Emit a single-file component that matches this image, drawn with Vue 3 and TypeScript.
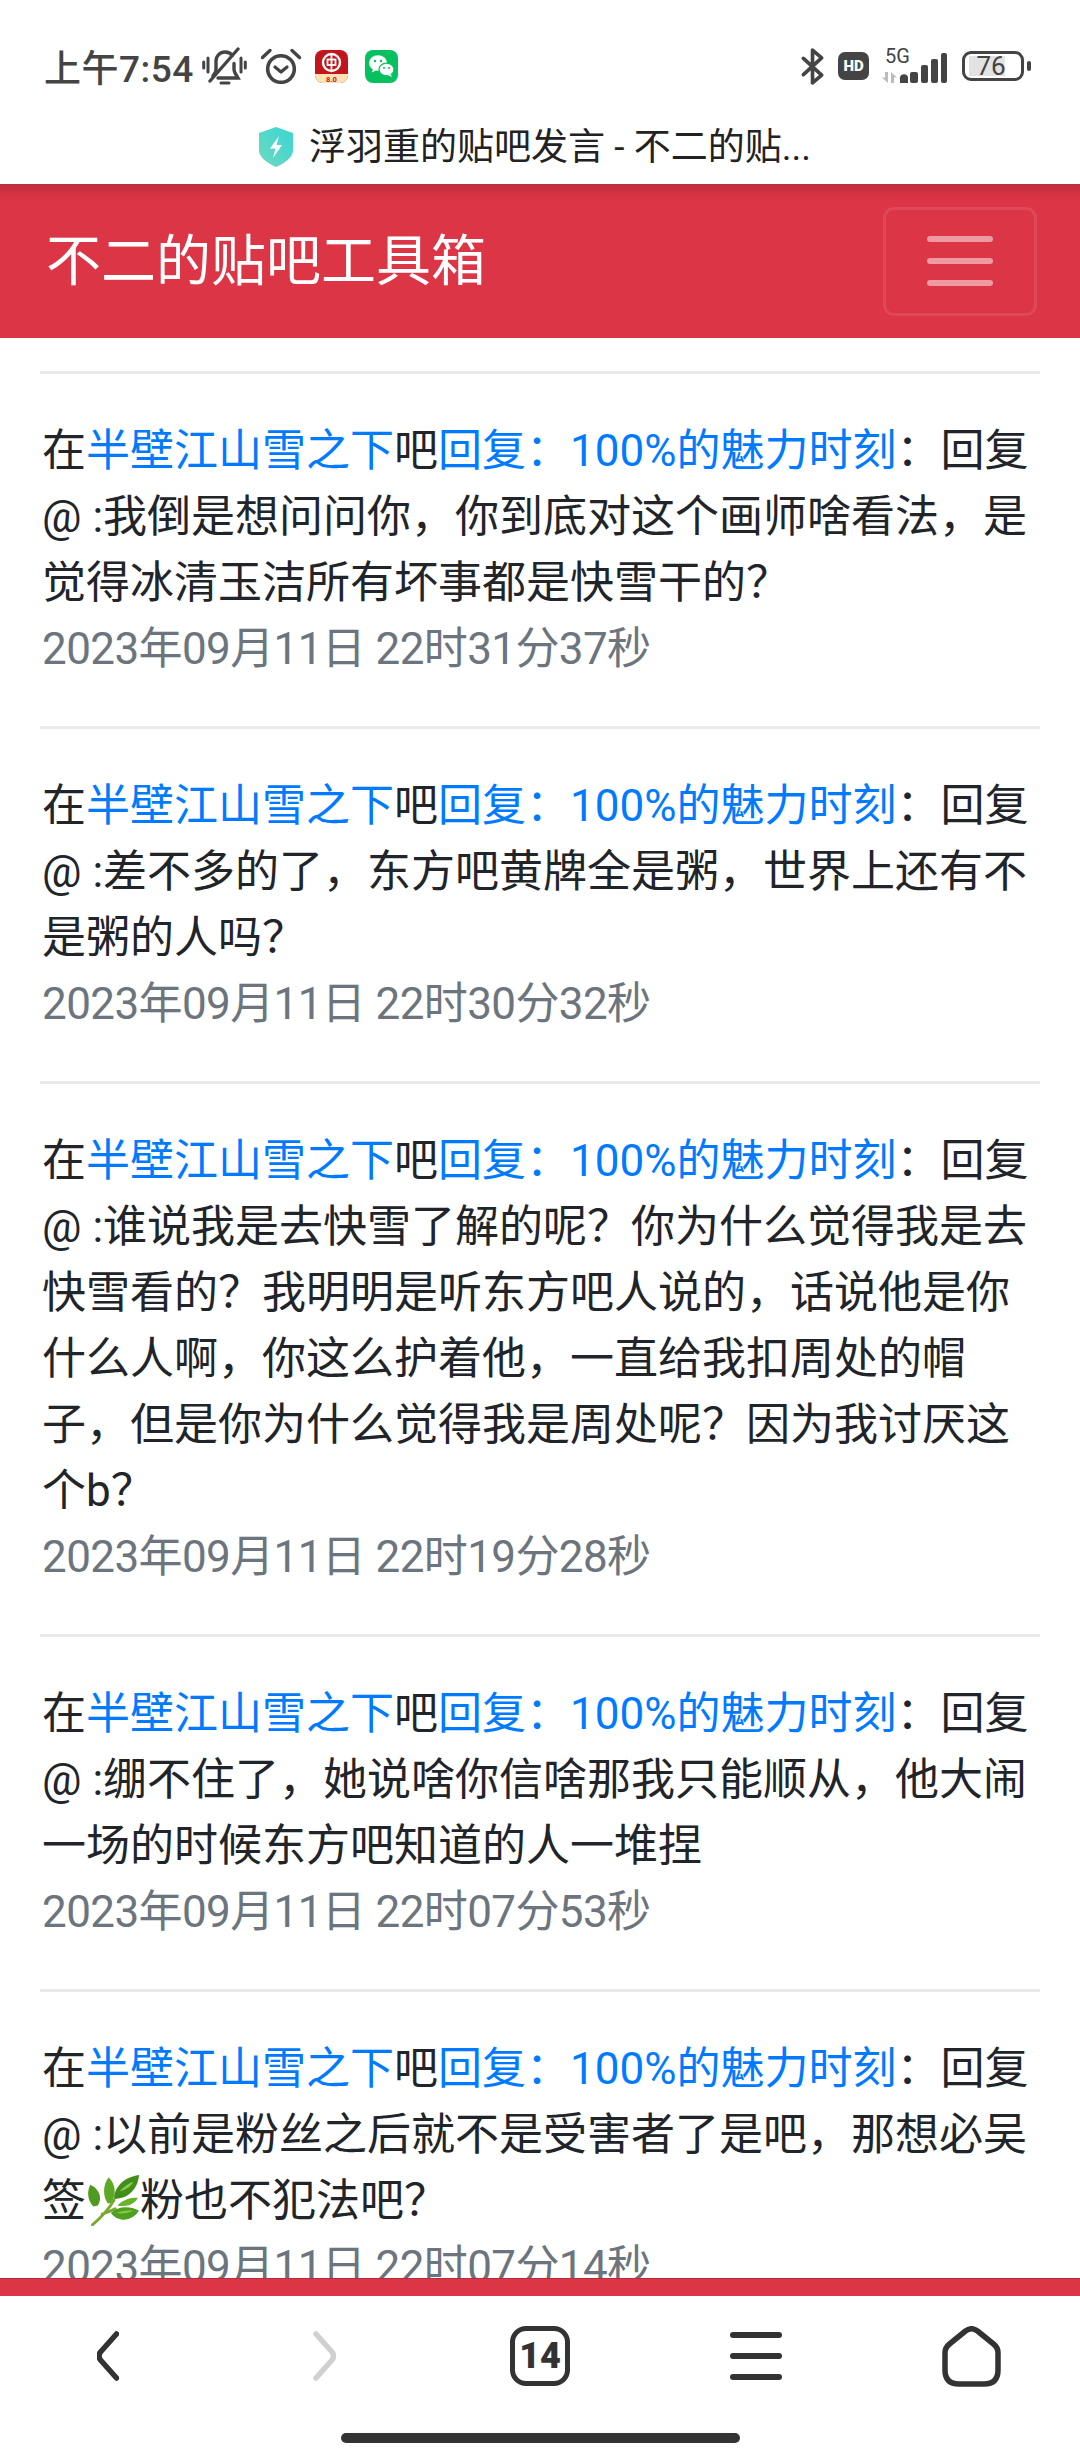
<script setup lang="ts">
interface Post { text: string; time: string; herb?: boolean; after?: string }
const posts: Post[] = [
  { text: '：回复 @ :我倒是想问问你，你到底对这个画师啥看法，是觉得冰清玉洁所有坏事都是快雪干的？', time: '2023年09月11日 22时31分37秒' },
  { text: '：回复 @ :差不多的了，东方吧黄牌全是粥，世界上还有不是粥的人吗？', time: '2023年09月11日 22时30分32秒' },
  { text: '：回复 @ :谁说我是去快雪了解的呢？你为什么觉得我是去快雪看的？我明明是听东方吧人说的，话说他是你什么人啊，你这么护着他，一直给我扣周处的帽子，但是你为什么觉得我是周处呢？因为我讨厌这个b？', time: '2023年09月11日 22时19分28秒' },
  { text: '：回复 @ :绷不住了，她说啥你信啥那我只能顺从，他大闹一场的时候东方吧知道的人一堆捏', time: '2023年09月11日 22时07分53秒' },
  { text: '：回复 @ :以前是粉丝之后就不是受害者了是吧，那想必吴签', herb: true, after: '粉也不犯法吧？', time: '2023年09月11日 22时07分14秒' }
]
</script>

<template>
  <div class="screen">
    <div class="status">
      <div class="status-left">
        <span class="clock">上午7:54</span>
        <svg class="i-bell" viewBox="0 0 45 38" fill="none" stroke="#444" stroke-width="3.400" stroke-linecap="round">
          <path d="M11 29l2-3c.7-1.200 1-2.400 1-3.800V14c0-5 4-9 9-9 3 0 5.600 1.300 7.300 3.500M32 16.500V22c0 1.400.3 2.600 1 3.800L36 31H16" />
          <path d="M8 34L36 2" />
          <path d="M1.700 15v6M6 11v14M39 11v14M43.300 15v6" stroke-width="3" />
          <path d="M19 36h8" stroke-width="3" />
        </svg>
        <svg class="i-alarm" viewBox="0 0 42 36" fill="none" stroke="#444" stroke-linecap="round">
          <circle cx="21" cy="21" r="13.300" stroke-width="3.600" />
          <path d="M15 19l6 5 6-5" stroke-width="3.200" stroke-linejoin="round" />
          <path d="M2.500 9.500L10 2.500M39.500 9.500L32 2.500" stroke-width="3.400" />
        </svg>
        <svg class="i-app" viewBox="0 0 33 33">
          <defs><clipPath id="bankclip"><rect width="33" height="33" rx="8" /></clipPath></defs>
          <g clip-path="url(#bankclip)">
            <rect width="33" height="33" fill="#c3161c" />
            <rect y="24" width="33" height="9" fill="#fde3b4" />
            <circle cx="16.500" cy="12.500" r="8.500" fill="none" stroke="#fff" stroke-width="2.400" />
            <rect x="12.500" y="9.500" width="8" height="5.500" fill="none" stroke="#fff" stroke-width="1.800" />
            <path d="M16.500 4v17" stroke="#fff" stroke-width="1.800" />
            <text x="16.500" y="31.500" text-anchor="middle" font-size="7.500" font-family="Roboto, sans-serif" font-weight="700" fill="#c3161c">8.0</text>
          </g>
        </svg>
        <svg class="i-app i-wechat" viewBox="0 0 33 33">
          <rect width="33" height="33" rx="8" fill="#07c160" />
          <ellipse cx="13" cy="13" rx="9" ry="7.800" fill="#fff" />
          <path d="M8 18.500l-1 4 4.500-2.500z" fill="#fff" />
          <ellipse cx="21.500" cy="19.500" rx="7.500" ry="6.400" fill="#fff" stroke="#07c160" stroke-width="1.200" />
          <path d="M25.500 24l1.500 3-4-1.800z" fill="#fff" />
          <circle cx="10" cy="11" r="1.200" fill="#07c160" />
          <circle cx="16" cy="11" r="1.200" fill="#07c160" />
          <circle cx="19" cy="18" r="1" fill="#07c160" />
          <circle cx="24" cy="18" r="1" fill="#07c160" />
        </svg>
      </div>
      <div class="status-right">
        <svg class="i-bt" viewBox="0 0 25 39" fill="none" stroke="#444" stroke-width="3.800" stroke-linecap="round" stroke-linejoin="round">
          <path d="M2.500 11l19 17.500L12 36.500V2.500l9.500 8L2.500 28" />
        </svg>
        <svg class="i-hd" viewBox="0 0 31 28">
          <rect width="31" height="28" rx="7" fill="#444" />
          <text x="15.500" y="19.200" text-anchor="middle" font-size="15" font-weight="900" font-family="Roboto, sans-serif" fill="#fff">HD</text>
        </svg>
        <svg class="i-signal" viewBox="0 0 66 36">
          <text x="4" y="15" font-size="20" font-family="Roboto, sans-serif" fill="#444">5G</text>
          <path d="M7 24v11l-6-5.500h3V24zM10 35V24l6 5.500h-3V35z" fill="#bbb" />
          <path d="M19 35v-3a4 4 0 0 1 8-3v6z" fill="#444" />
          <rect x="29" y="24" width="8" height="11" rx="2" fill="#444" />
          <rect x="40" y="17" width="7" height="18" rx="2" fill="#444" />
          <rect x="50" y="11" width="7" height="24" rx="2" fill="#444" />
          <rect x="60" y="5" width="6" height="30" rx="2" fill="#444" />
        </svg>
        <div class="battery">
          <div class="battery-box"><span class="battery-fill"></span><span class="battery-num">76</span></div>
          <span class="battery-nub"></span>
        </div>
      </div>
    </div>

    <div class="title-row">
      <svg class="i-shield" viewBox="0 0 34 40">
        <defs>
          <linearGradient id="shieldgrad" x1="0" y1="1" x2="1" y2="0">
            <stop offset="0" stop-color="#70d8bf" />
            <stop offset="1" stop-color="#38d6d4" />
          </linearGradient>
        </defs>
        <path d="M17 0l17 6v18c0 6-9.500 13-17 16C9.500 37 0 30 0 24V6z" fill="url(#shieldgrad)" />
        <path d="M20 9l-9 12.500h5.500L14 31l9-13h-5.500z" fill="#fff" />
      </svg>
      <span class="title-text">浮羽重的贴吧发言 - 不二的贴...</span>
    </div>

    <header class="navbar">
      <span class="brand">不二的贴吧工具箱</span>
      <button class="toggler" type="button" aria-label="menu">
        <span></span><span></span><span></span>
      </button>
    </header>

    <main class="content">
      <article v-for="(p, i) in posts" :key="i" class="post">
        <hr class="rule" />
        <p class="line">在<a class="link">半壁江山雪之下</a>吧<a class="link">回复：100%的魅力时刻</a>{{ p.text }}<svg v-if="p.herb" class="herb" viewBox="0 0 48 48">
            <path d="M5 47C12 41 20 33 25 24M14 37c3-1 8-3 12-5" fill="none" stroke="#7aa832" stroke-width="2.600" stroke-linecap="round" />
            <path d="M6 30C0 24 0 16 3 10c7 3 12 11 7 19z" fill="#4f9a1f" />
            <path d="M19 27c-4-6-5-16 1-24 6 6 8 16 2 24z" fill="#5ea826" />
            <path d="M25 23c0-11 9-20 23-22-1 12-9 22-23 22z" fill="#3f8f1a" />
            <path d="M28 29c5-5 12-8 19-7-3 6-10 9-19 7z" fill="#68b22c" />
            <path d="M22 36c6-6 17-7 26-2-6 9-18 12-26 2z" fill="#4f9f20" />
            <path d="M30 16c4-4 8-7 13-9-3 5-7 8-13 9zM27 36c5-2 11-3 16-2-5 2-11 3-16 2z" fill="#8cc84b" />
          </svg>{{ p.after }}</p>
        <p class="line time">{{ p.time }}</p>
      </article>
    </main>

    <div class="redbar"></div>

    <nav class="browser">
      <div class="tools">
        <svg class="t-back" viewBox="0 0 22 50" fill="none" stroke="#333" stroke-width="5.500" stroke-linecap="round" stroke-linejoin="round">
          <path d="M19.500 3L3.500 21q-3 4 0 8l16 18" />
        </svg>
        <svg class="t-forward" viewBox="0 0 22 50" fill="none" stroke="#d0d0d0" stroke-width="5.500" stroke-linecap="round" stroke-linejoin="round">
          <path d="M2.500 3l16 18q3 4 0 8l-16 18" />
        </svg>
        <div class="t-tabs">14</div>
        <div class="t-menu"><span></span><span></span><span></span></div>
        <svg class="t-home" viewBox="0 0 59 61" fill="none" stroke="#333" stroke-width="5.500" stroke-linejoin="round">
          <path d="M23.500 5q6-4.500 12 0l16 13q4.500 3.500 4.500 9v17q0 14-14 14H17Q3 58 3 44V27q0-5.500 4.500-9z" />
        </svg>
      </div>
      <div class="pill"></div>
    </nav>
  </div>
</template>

<style>
html, body { margin: 0; background: #fff; }
</style>

<style scoped>
.screen {
  width: 1080px;
  height: 2460px;
  display: flex;
  flex-direction: column;
  overflow: hidden;
  background: #fff;
  font-family: Roboto, "Noto Sans CJK SC", sans-serif;
  color: #212529;
}
.status {
  height: 80px;
  padding: 26px 0 0 44px;
  display: flex;
  justify-content: space-between;
  align-items: center;
  flex: none;
}
.status-left, .status-right { display: flex; align-items: center; }
.status-right { padding-right: 49px; }
.clock { font-size: 37px; letter-spacing: 0.5px; color: #444; font-weight: 500; width: 158px; white-space: nowrap; }
.i-bell { width: 45px; height: 38px; }
.i-alarm { width: 42px; height: 36px; margin-left: 13px; }
.i-app { width: 33px; height: 33px; margin-left: 13px; }
.i-wechat { margin-left: 17px; }
.i-bt { width: 24px; height: 39px; }
.i-hd { width: 31px; height: 28px; margin-left: 13px; }
.i-signal { width: 66px; height: 36px; margin-left: 12px; }
.battery { display: flex; align-items: center; margin-left: 15px; }
.battery-box {
  position: relative;
  box-sizing: border-box;
  width: 62px;
  height: 30px;
  border: 3.500px solid #444;
  border-radius: 9px;
  display: flex;
  align-items: center;
  justify-content: center;
}
.battery-fill { position: absolute; left: 4px; top: 2px; bottom: 2px; width: 36px; background: #e2e2e2; }
.battery-num { position: relative; font-size: 26px; color: #444; line-height: 1; margin-right: 4px; }
.battery-nub { width: 4px; height: 10px; margin-left: 3px; background: #444; border-radius: 2px; }

.title-row {
  height: 78px;
  flex: none;
  display: flex;
  align-items: center;
  justify-content: center;
  gap: 16px;
  padding: 4px 10px 0 0;
  box-sizing: border-box;
}
.i-shield { width: 34px; height: 40px; }
.title-text { font-size: 37px; line-height: 1; color: #222; white-space: nowrap; font-weight: 400; }

.navbar {
  height: 154px;
  flex: none;
  background: #dc3545;
  box-shadow: inset 0 14px 8px -8px rgba(120, 30, 40, 0.3);
  display: flex;
  align-items: center;
  justify-content: space-between;
  padding: 0 43px 0 46px;
  box-sizing: border-box;
}
.brand { font-size: 55px; color: #fff; white-space: nowrap; line-height: 1; }
.toggler {
  width: 154px;
  height: 109px;
  box-sizing: border-box;
  background: transparent;
  border: 3px solid rgba(255, 255, 255, 0.1);
  border-radius: 11px;
  padding: 0;
  display: flex;
  flex-direction: column;
  align-items: center;
  justify-content: center;
  gap: 16px;
}
.toggler span { display: block; width: 66px; height: 6px; border-radius: 3px; background: rgba(255, 255, 255, 0.5); }

.content {
  flex: 1;
  min-height: 0;
  overflow: hidden;
  padding: 33px 40px 0;
}
.rule { margin: 0 0 44px; border: 0; height: 3px; background: #e8e9ea; }
.line { margin: 0; padding-left: 2px; font-size: 44px; line-height: 66px; }
.post { padding-bottom: 44px; }
.link { color: #007bff; }
.time { color: #6c757d; letter-spacing: -0.6px; }
.herb { width: 52px; height: 52px; vertical-align: -10px; margin: 0 1px; }

.redbar { height: 18px; flex: none; background: #dc3545; box-shadow: inset 0 1px 0 rgba(120, 30, 40, 0.4); }

.browser { height: 164px; flex: none; display: flex; flex-direction: column; align-items: center; background: #fff; }
.tools { width: 100%; box-sizing: border-box; height: 137px; padding: 0 0 17px 97px; display: flex; align-items: center; }
.t-back { width: 22px; height: 50px; }
.t-forward { width: 23px; height: 50px; margin-left: 194px; }
.t-tabs {
  width: 60px;
  height: 60px;
  box-sizing: border-box;
  border: 5.500px solid #333;
  border-radius: 16px;
  margin-left: 174px;
  display: flex;
  align-items: center;
  justify-content: center;
  font-size: 36px;
  font-weight: 900;
  color: #333;
  font-family: Roboto, sans-serif;
}
.t-menu { width: 52px; margin-left: 160px; display: flex; flex-direction: column; gap: 15px; }
.t-menu span { display: block; height: 6px; border-radius: 3px; background: #333; }
.t-home { width: 59px; height: 61px; margin-left: 160px; }
.pill { width: 399px; height: 10px; border-radius: 5px; background: #333; }
</style>
